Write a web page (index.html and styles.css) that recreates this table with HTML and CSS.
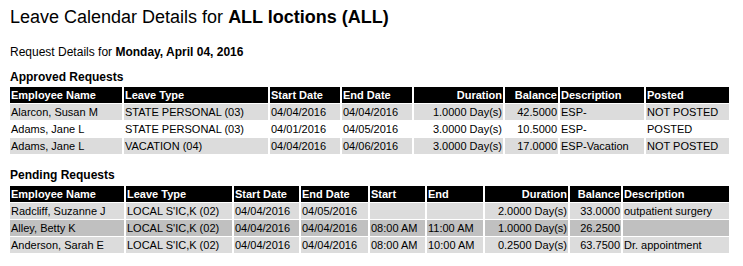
FILE: index.html
```html
<!DOCTYPE html>
<html>
<head>
<meta charset="utf-8">
<title>Leave Calendar Details</title>
<link rel="stylesheet" href="styles.css">
</head>
<body>
<div class="page">
  <h1 class="title">Leave Calendar Details for <b>ALL loctions (ALL)</b></h1>
  <p class="request">Request Details for <b>Monday, April 04, 2016</b></p>

  <h2 class="section approved-title">Approved Requests</h2>
  <table class="grid approved">
    <thead>
      <tr>
        <th class="a1">Employee Name</th>
        <th class="a2">Leave Type</th>
        <th class="a3">Start Date</th>
        <th class="a4">End Date</th>
        <th class="a5 num">Duration</th>
        <th class="a6 num">Balance</th>
        <th class="a7">Description</th>
        <th class="a8">Posted</th>
      </tr>
    </thead>
    <tbody>
      <tr class="gray">
        <td>Alarcon, Susan M</td><td>STATE PERSONAL (03)</td><td>04/04/2016</td><td>04/04/2016</td><td class="num">1.0000 Day(s)</td><td class="num">42.5000</td><td>ESP-</td><td>NOT POSTED</td>
      </tr>
      <tr class="white">
        <td>Adams, Jane L</td><td>STATE PERSONAL (03)</td><td>04/01/2016</td><td>04/05/2016</td><td class="num">3.0000 Day(s)</td><td class="num">10.5000</td><td>ESP-</td><td>POSTED</td>
      </tr>
      <tr class="gray">
        <td>Adams, Jane L</td><td>VACATION (04)</td><td>04/04/2016</td><td>04/06/2016</td><td class="num">3.0000 Day(s)</td><td class="num">17.0000</td><td>ESP-Vacation</td><td>NOT POSTED</td>
      </tr>
    </tbody>
  </table>

  <h2 class="section pending-title">Pending Requests</h2>
  <table class="grid pending">
    <thead>
      <tr>
        <th class="p1">Employee Name</th>
        <th class="p2">Leave Type</th>
        <th class="p3">Start Date</th>
        <th class="p4">End Date</th>
        <th class="p5">Start</th>
        <th class="p6">End</th>
        <th class="p7 num">Duration</th>
        <th class="p8 num">Balance</th>
        <th class="p9">Description</th>
      </tr>
    </thead>
    <tbody>
      <tr class="gray">
        <td>Radcliff, Suzanne J</td><td>LOCAL S'IC,K (02)</td><td>04/04/2016</td><td>04/05/2016</td><td></td><td></td><td class="num">2.0000 Day(s)</td><td class="num">33.0000</td><td>outpatient surgery</td>
      </tr>
      <tr class="silver">
        <td>Alley, Betty K</td><td>LOCAL S'IC,K (02)</td><td>04/04/2016</td><td>04/04/2016</td><td>08:00 AM</td><td>11:00 AM</td><td class="num">1.0000 Day(s)</td><td class="num">26.2500</td><td></td>
      </tr>
      <tr class="gray">
        <td>Anderson, Sarah E</td><td>LOCAL S'IC,K (02)</td><td>04/04/2016</td><td>04/04/2016</td><td>08:00 AM</td><td>10:00 AM</td><td class="num">0.2500 Day(s)</td><td class="num">63.7500</td><td>Dr. appointment</td>
      </tr>
    </tbody>
  </table>
</div>
</body>
</html>
```

FILE: styles.css
```css
html, body {
  margin: 0;
  padding: 0;
  background: #ffffff;
}

body {
  font-family: "Liberation Sans", Arial, sans-serif;
  color: #000000;
}

.page {
  padding: 7px 8px 0 8px;
}

.title {
  margin: 0;
  padding-left: 2px;
  font-size: 18px;
  line-height: 21px;
  font-weight: normal;
}

.title b {
  font-weight: bold;
}

.request {
  margin: 17px 0 0 0;
  padding-left: 2px;
  font-size: 12px;
  line-height: 14px;
}

.section {
  margin: 0;
  padding-left: 2px;
  font-size: 12px;
  line-height: 14px;
  font-weight: bold;
}

.approved-title {
  margin-top: 11px;
  margin-bottom: 2px;
}

.pending-title {
  margin-top: 13px;
  margin-bottom: 3px;
}

.grid {
  table-layout: fixed;
  width: 723px;
  border-collapse: separate;
  border-spacing: 2px 1px;
  font-size: 11px;
  line-height: 14px;
}

.grid th,
.grid td {
  box-sizing: border-box;
  padding: 1px;
  white-space: nowrap;
  overflow: hidden;
  text-align: left;
  vertical-align: middle;
}

.grid th {
  background: #000000;
  color: #ffffff;
  font-weight: bold;
}

.grid .num {
  text-align: right;
}

.gray td {
  background: #dcdcdc;
}

.white td {
  background: #ffffff;
}

.silver td {
  background: #c0c0c0;
}

/* Approved columns */
.a1 { width: 112px; }
.a2 { width: 144px; }
.a3 { width: 70px; }
.a4 { width: 70px; }
.a5 { width: 89px; }
.a6 { width: 53px; }
.a7 { width: 84px; }
.a8 { width: 83px; }

/* Pending columns */
.p1 { width: 114px; }
.p2 { width: 106px; }
.p3 { width: 65px; }
.p4 { width: 67px; }
.p5 { width: 55px; }
.p6 { width: 56px; }
.p7 { width: 83px; }
.p8 { width: 51px; }
.p9 { width: 106px; }
```
